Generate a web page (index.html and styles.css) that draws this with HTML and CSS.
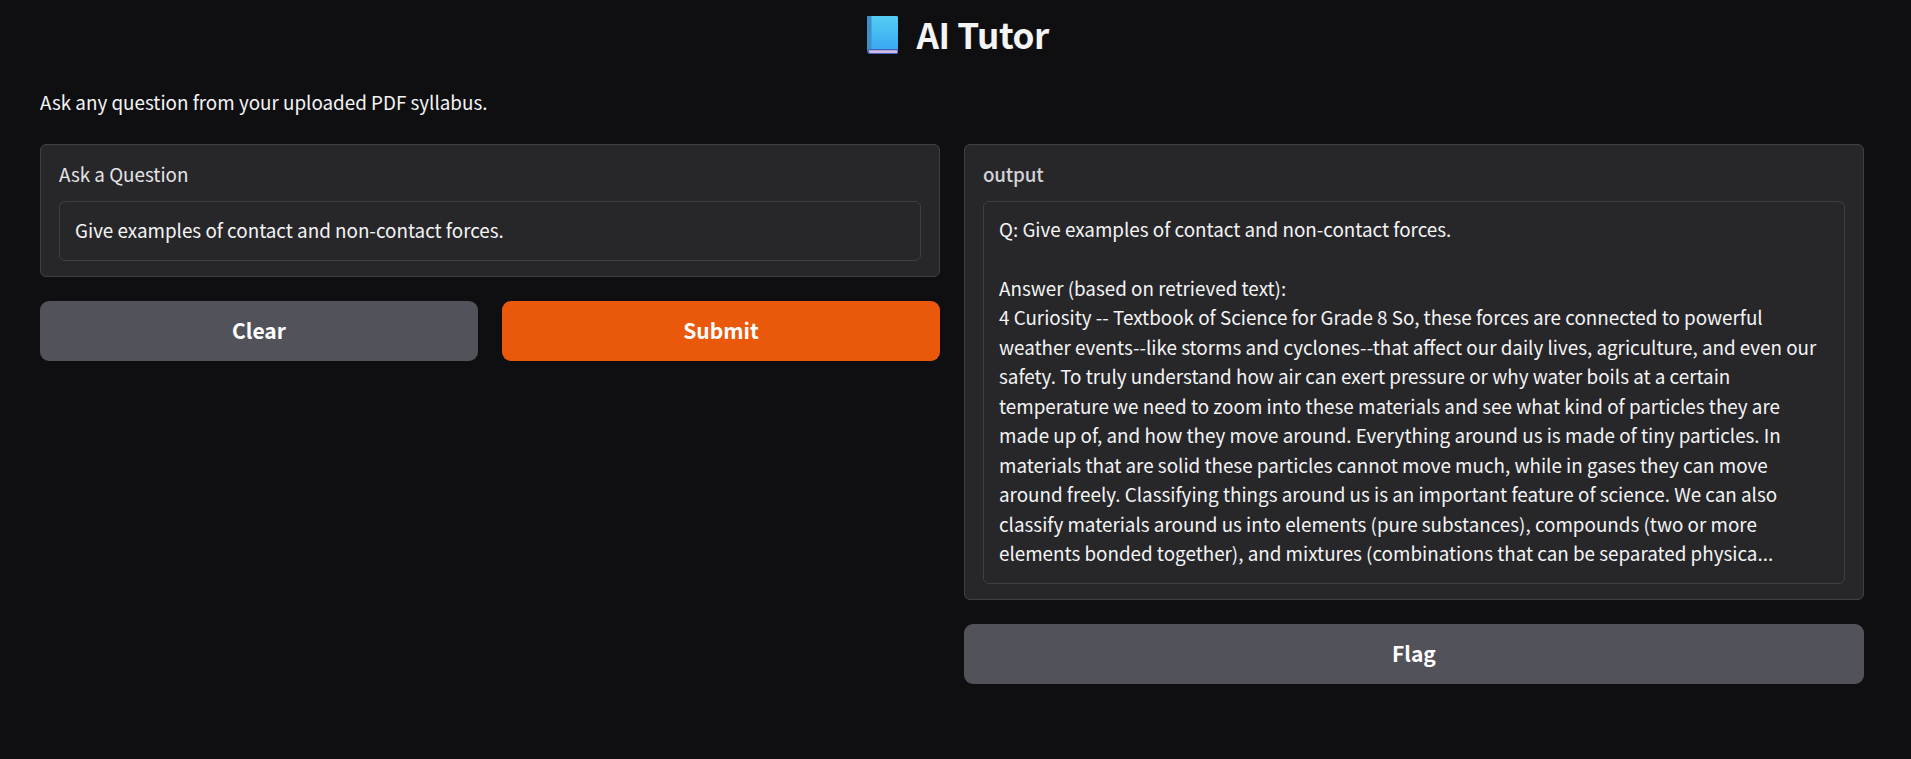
FILE: index.html
```html
<!DOCTYPE html>
<html lang="en">
<head>
<meta charset="utf-8">
<title>AI Tutor</title>
<link rel="stylesheet" href="styles.css">
</head>
<body>
<main class="app">
  <h1 class="title">
    <svg class="book" viewBox="0 0 31 38" aria-hidden="true">
      <defs><linearGradient id="cover" x1="0" y1="0" x2="0" y2="1"><stop offset="0" stop-color="#55cdf3"/><stop offset="1" stop-color="#38a8f2"/></linearGradient></defs>
      <path d="M2 0h27.500q1.500 0 1.500 1.500v35q0 1.500-1.500 1.500H3q-3 0-3-3V2q0-2 2-2z" fill="#3f63bd"/>
      <path d="M2 34.300h28.200v2.700H3q-1 0-1-1z" fill="#d4bbe8"/>
      <path d="M2 0h27.500q1.500 0 1.500 1.500V33H3q-2 0-3 1V2q0-2 2-2z" fill="url(#cover)"/>
      <path d="M2 0h2.500v33H3q-2 0-3 1V2q0-2 2-2z" fill="#3d8fca"/>
    </svg>
    <span>AI Tutor</span>
  </h1>
  <p class="description">Ask any question from your uploaded PDF syllabus.</p>
  <div class="columns">
    <section class="column">
      <div class="panel">
        <label class="label" for="question">Ask a Question</label>
        <div class="field" id="question">Give examples of contact and non-contact forces.</div>
      </div>
      <div class="actions">
        <button class="button">Clear</button>
        <button class="button primary">Submit</button>
      </div>
    </section>
    <section class="column">
      <div class="panel">
        <div class="label medium">output</div>
        <div class="field answer">Q: Give examples of contact and non-contact forces.<br><br>Answer (based on retrieved text):<br>4 Curiosity -- Textbook of Science for Grade 8 So, these forces are connected to powerful<br>weather events--like storms and cyclones--that affect our daily lives, agriculture, and even our<br>safety. To truly understand how air can exert pressure or why water boils at a certain<br>temperature we need to zoom into these materials and see what kind of particles they are<br>made up of, and how they move around. Everything around us is made of tiny particles. In<br>materials that are solid these particles cannot move much, while in gases they can move<br>around freely. Classifying things around us is an important feature of science. We can also<br>classify materials around us into elements (pure substances), compounds (two or more<br>elements bonded together), and mixtures (combinations that can be separated physica...</div>
      </div>
      <button class="button">Flag</button>
    </section>
  </div>
</main>
</body>
</html>
```
FILE: styles.css
```css
* { box-sizing: border-box; }
body {
  margin: 0;
  height: 759px;
  overflow: hidden;
  background: #0f0f11;
  color: #f4f4f5;
  font-family: "Noto Sans CJK SC", "Noto Sans", sans-serif;
  font-size: 18.82px;
  line-height: 29.4px;
}
.app { padding: 10px 47px 0 40px; }
.title {
  display: flex;
  justify-content: center;
  align-items: center;
  gap: 18.5px;
  height: 50px;
  margin: 0;
  padding-left: 12px;
  font-size: 35.1px;
  font-weight: 600;
  line-height: 48px;
}
.book { width: 31px; height: 38px; }
.title span { height: 50px; letter-spacing: -0.45px; }
.description { height: 30px; margin: 27px 0; }
.columns { display: grid; grid-template-columns: repeat(2, minmax(0, 1fr)); gap: 24px; }
.column { display: flex; flex-direction: column; gap: 24px; min-width: 0; }
.panel {
  padding: 14px 18px 15px;
  border: 1px solid #3f3f46;
  border-radius: 6px;
  background: #27272a;
}
.label { display: block; height: 30px; margin-bottom: 12px; color: #e4e4e7; }
.medium { font-weight: 500; color: #d4d4d8; letter-spacing: -0.2px; }
.field {
  height: 60px;
  padding: 13px 15px;
  border: 1px solid #3f3f46;
  border-radius: 6px;
  white-space: nowrap;
  color: #f4f4f5;
}
.answer { height: 383px; padding-top: 12px; line-height: 29.45px; }
.actions { display: grid; grid-template-columns: 1fr 1fr; gap: 24px; }
.button {
  height: 60px;
  padding: 0 0 2px;
  border: 0;
  border-radius: 9px;
  background: #52525b;
  color: #fff;
  font: 600 21px/58px "Noto Sans CJK SC", "Noto Sans", sans-serif;
}
.primary { background: #ea580c; }
```
